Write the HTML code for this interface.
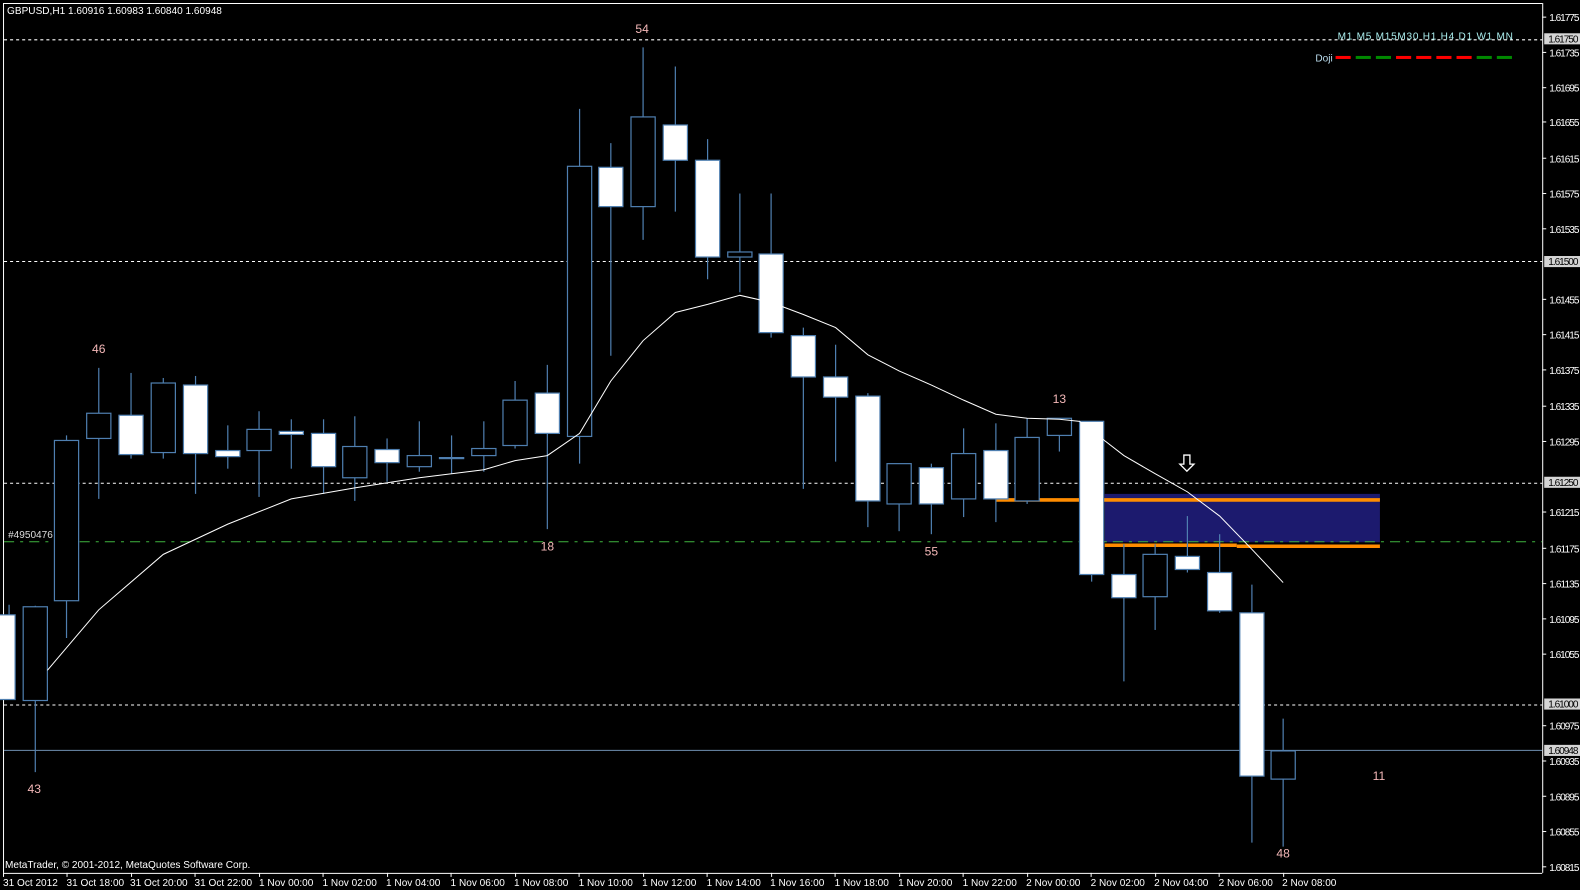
<!DOCTYPE html>
<html><head><meta charset="utf-8"><style>
html,body{margin:0;padding:0;background:#000;overflow:hidden}
svg{display:block}
text{font-family:"Liberation Sans",sans-serif;font-size:10px}
.ax{fill:#fff}
.w{fill:#fff;stroke:#4f7fb0;stroke-width:1.2}
.h{fill:#000;stroke:#4f7fb0;stroke-width:1.2}
.k line{stroke:#4f7fb0;stroke-width:1.2}
.n{fill:#f4b8b8;font-size:12px;text-anchor:middle}
.hl{fill:#d4d4d4}
</style></head><body>
<svg width="1580" height="890" viewBox="0 0 1567.5 883" preserveAspectRatio="none" xmlns="http://www.w3.org/2000/svg">
<rect width="1567.5" height="883" fill="#000"/>
<line x1="3.5" y1="3" x2="3.5" y2="866" stroke="#fff"/>
<line x1="3" y1="3.5" x2="1530" y2="3.5" stroke="#fff"/>
<line x1="1530.5" y1="3" x2="1530.5" y2="866" stroke="#fff"/>
<line x1="3" y1="866.5" x2="1530" y2="866.5" stroke="#fff"/>
<g stroke="#fff" stroke-dasharray="3,3">
<line x1="4" y1="39.5" x2="1530" y2="39.5"/>
<line x1="4" y1="259.5" x2="1530" y2="259.5"/>
<line x1="4" y1="479.5" x2="1530" y2="479.5"/>
<line x1="4" y1="699.5" x2="1530" y2="699.5"/>
</g>
<line x1="4" y1="744.5" x2="1530" y2="744.5" stroke="#6f8fb0"/>
<rect x="1096" y="490" width="273" height="48" fill="#1c1a6e"/>
<line x1="988" y1="496" x2="1369" y2="496" stroke="#ff8c00" stroke-width="3.5"/>
<line x1="1096" y1="541" x2="1227" y2="541" stroke="#ff8c00" stroke-width="3.5"/>
<line x1="1227" y1="542" x2="1369" y2="542" stroke="#ff8c00" stroke-width="3.5"/>
<line x1="4" y1="537.5" x2="1530" y2="537.5" stroke="#3fb43f" stroke-dasharray="10,6,3,6"/>
<text x="8" y="534" fill="#ddd" font-size="9px">#4950476</text>
<g class="k">
<line x1="9" y1="600" x2="9" y2="694"/><rect class="w" x="-3" y="610" width="18" height="84"/>
<line x1="35" y1="601" x2="35" y2="766"/><rect class="h" x="23" y="602" width="24" height="93"/>
<line x1="66" y1="432" x2="66" y2="633"/><rect class="h" x="54" y="437" width="24" height="159"/>
<line x1="98" y1="365" x2="98" y2="495"/><rect class="h" x="86" y="410" width="24" height="25"/>
<line x1="130" y1="370" x2="130" y2="455"/><rect class="w" x="118" y="412" width="24" height="39"/>
<line x1="162" y1="375" x2="162" y2="455"/><rect class="h" x="150" y="380" width="24" height="69"/>
<line x1="194" y1="373" x2="194" y2="490"/><rect class="w" x="182" y="382" width="24" height="68"/>
<line x1="226" y1="422" x2="226" y2="465"/><rect class="w" x="214" y="447" width="24" height="6"/>
<line x1="257" y1="408" x2="257" y2="493"/><rect class="h" x="245" y="426" width="24" height="21"/>
<line x1="289" y1="416" x2="289" y2="465"/><rect class="w" x="277" y="428" width="24" height="3"/>
<line x1="321" y1="416" x2="321" y2="490"/><rect class="w" x="309" y="430" width="24" height="33"/>
<line x1="352" y1="413" x2="352" y2="497"/><rect class="h" x="340" y="443" width="24" height="31"/>
<line x1="384" y1="435" x2="384" y2="478"/><rect class="w" x="372" y="446" width="24" height="13"/>
<line x1="416" y1="418" x2="416" y2="468"/><rect class="h" x="404" y="452" width="24" height="11"/>
<line x1="448" y1="432" x2="448" y2="470"/><rect class="h" x="436" y="454" width="24" height="1"/>
<line x1="480" y1="418" x2="480" y2="468"/><rect class="h" x="468" y="445" width="24" height="7"/>
<line x1="511" y1="378" x2="511" y2="445"/><rect class="h" x="499" y="397" width="24" height="45"/>
<line x1="543" y1="362" x2="543" y2="525"/><rect class="w" x="531" y="390" width="24" height="40"/>
<line x1="575" y1="108" x2="575" y2="460"/><rect class="h" x="563" y="165" width="24" height="268"/>
<line x1="606" y1="142" x2="606" y2="353"/><rect class="w" x="594" y="166" width="24" height="39"/>
<line x1="638" y1="47" x2="638" y2="238"/><rect class="h" x="626" y="116" width="24" height="89"/>
<line x1="670" y1="66" x2="670" y2="210"/><rect class="w" x="658" y="124" width="24" height="35"/>
<line x1="702" y1="138" x2="702" y2="277"/><rect class="w" x="690" y="159" width="24" height="96"/>
<line x1="734" y1="192" x2="734" y2="290"/><rect class="h" x="722" y="250" width="24" height="5"/>
<line x1="765" y1="192" x2="765" y2="335"/><rect class="w" x="753" y="252" width="24" height="78"/>
<line x1="797" y1="325" x2="797" y2="485"/><rect class="w" x="785" y="333" width="24" height="41"/>
<line x1="829" y1="342" x2="829" y2="458"/><rect class="w" x="817" y="374" width="24" height="20"/>
<line x1="861" y1="390" x2="861" y2="523"/><rect class="w" x="849" y="393" width="24" height="104"/>
<line x1="892" y1="460" x2="892" y2="527"/><rect class="h" x="880" y="460" width="24" height="40"/>
<line x1="924" y1="460" x2="924" y2="530"/><rect class="w" x="912" y="464" width="24" height="36"/>
<line x1="956" y1="425" x2="956" y2="513"/><rect class="h" x="944" y="450" width="24" height="45"/>
<line x1="988" y1="420" x2="988" y2="518"/><rect class="w" x="976" y="447" width="24" height="48"/>
<line x1="1019" y1="415" x2="1019" y2="500"/><rect class="h" x="1007" y="434" width="24" height="63"/>
<line x1="1051" y1="415" x2="1051" y2="448"/><rect class="h" x="1039" y="415" width="24" height="17"/>
<line x1="1083" y1="418" x2="1083" y2="577"/><rect class="w" x="1071" y="418" width="24" height="152"/>
<line x1="1115" y1="540" x2="1115" y2="676"/><rect class="w" x="1103" y="570" width="24" height="23"/>
<line x1="1146" y1="540" x2="1146" y2="625"/><rect class="h" x="1134" y="550" width="24" height="42"/>
<line x1="1178" y1="512" x2="1178" y2="568"/><rect class="w" x="1166" y="552" width="24" height="13"/>
<line x1="1210" y1="530" x2="1210" y2="608"/><rect class="w" x="1198" y="568" width="24" height="38"/>
<line x1="1242" y1="580" x2="1242" y2="836"/><rect class="w" x="1230" y="608" width="24" height="162"/>
<line x1="1273" y1="713" x2="1273" y2="840"/><rect class="h" x="1261" y="745" width="24" height="28"/>
</g>
<polyline fill="none" stroke="#fff" stroke-width="1" points="47,665 98,605 162,550 226,520 289,495 352,484 416,474 480,466 511,457 543,452 575,430 606,378 638,338 670,310 702,302 734,293 765,300 797,312 829,325 861,352 892,368 924,382 956,397 988,411 1019,415 1051,416 1071,418 1097,438 1115,452 1146,470 1178,488 1210,512 1242,545 1273,578"/>
<path d="M1174.5 451.5 h6 v9 h4 l-7 7 l-7 -7 h4 z" fill="none" stroke="#fff" stroke-width="1.3"/>
<text class="n" x="637" y="33">54</text>
<text class="n" x="98" y="350">46</text>
<text class="n" x="34" y="787">43</text>
<text class="n" x="543" y="546">18</text>
<text class="n" x="1051" y="400">13</text>
<text class="n" x="924" y="551">55</text>
<text class="n" x="1368" y="774">11</text>
<text class="n" x="1273" y="851">48</text>
<text class="ax" x="7" y="14" fill="#fff">GBPUSD,H1  1.60916 1.60983 1.60840 1.60948</text>
<text x="5" y="861" fill="#fff" font-size="10.5px">MetaTrader, © 2001-2012, MetaQuotes Software Corp.</text>
<text x="1327" y="39" fill="#aee" font-size="9.5px" textLength="174" lengthAdjust="spacing">M1 M5 M15M30  H1  H4   D1  W1  MN</text>
<text x="1305" y="61" fill="#bde" font-size="9.5px">Doji</text>
<g stroke-width="3">
<line x1="1325" y1="57" x2="1340" y2="57" stroke="#f00"/>
<line x1="1345" y1="57" x2="1360" y2="57" stroke="#080"/>
<line x1="1365" y1="57" x2="1380" y2="57" stroke="#080"/>
<line x1="1385" y1="57" x2="1400" y2="57" stroke="#f00"/>
<line x1="1405" y1="57" x2="1420" y2="57" stroke="#f00"/>
<line x1="1425" y1="57" x2="1440" y2="57" stroke="#f00"/>
<line x1="1445" y1="57" x2="1460" y2="57" stroke="#f00"/>
<line x1="1465" y1="57" x2="1480" y2="57" stroke="#080"/>
<line x1="1485" y1="57" x2="1500" y2="57" stroke="#080"/>
</g>
<g stroke="#fff">
<line x1="1530" y1="17" x2="1534" y2="17"/><line x1="1530" y1="52" x2="1534" y2="52"/><line x1="1530" y1="87" x2="1534" y2="87"/><line x1="1530" y1="121" x2="1534" y2="121"/><line x1="1530" y1="157" x2="1534" y2="157"/><line x1="1530" y1="192" x2="1534" y2="192"/><line x1="1530" y1="227" x2="1534" y2="227"/><line x1="1530" y1="297" x2="1534" y2="297"/><line x1="1530" y1="332" x2="1534" y2="332"/><line x1="1530" y1="367" x2="1534" y2="367"/><line x1="1530" y1="403" x2="1534" y2="403"/><line x1="1530" y1="438" x2="1534" y2="438"/><line x1="1530" y1="508" x2="1534" y2="508"/><line x1="1530" y1="544" x2="1534" y2="544"/><line x1="1530" y1="579" x2="1534" y2="579"/><line x1="1530" y1="614" x2="1534" y2="614"/><line x1="1530" y1="649" x2="1534" y2="649"/><line x1="1530" y1="720" x2="1534" y2="720"/><line x1="1530" y1="755" x2="1534" y2="755"/><line x1="1530" y1="790" x2="1534" y2="790"/><line x1="1530" y1="825" x2="1534" y2="825"/><line x1="1530" y1="860" x2="1534" y2="860"/>
</g>
<g class="ax" font-size="9px">
<text x="1537" y="21" textLength="30">1.61775</text><text x="1537" y="56" textLength="30">1.61735</text><text x="1537" y="91" textLength="30">1.61695</text><text x="1537" y="125" textLength="30">1.61655</text><text x="1537" y="161" textLength="30">1.61615</text><text x="1537" y="196" textLength="30">1.61575</text><text x="1537" y="231" textLength="30">1.61535</text><text x="1537" y="301" textLength="30">1.61455</text><text x="1537" y="336" textLength="30">1.61415</text><text x="1537" y="371" textLength="30">1.61375</text><text x="1537" y="407" textLength="30">1.61335</text><text x="1537" y="442" textLength="30">1.61295</text><text x="1537" y="512" textLength="30">1.61215</text><text x="1537" y="548" textLength="30">1.61175</text><text x="1537" y="583" textLength="30">1.61135</text><text x="1537" y="618" textLength="30">1.61095</text><text x="1537" y="653" textLength="30">1.61055</text><text x="1537" y="724" textLength="30">1.60975</text><text x="1537" y="759" textLength="30">1.60935</text><text x="1537" y="794" textLength="30">1.60895</text><text x="1537" y="829" textLength="30">1.60855</text><text x="1537" y="864" textLength="30">1.60815</text>
</g>
<g>
<rect class="hl" x="1532" y="33" width="36" height="11"/><rect class="hl" x="1532" y="254" width="36" height="11"/><rect class="hl" x="1532" y="473" width="36" height="11"/><rect class="hl" x="1532" y="693" width="36" height="11"/><rect class="hl" x="1532" y="739" width="36" height="11"/>
</g>
<g fill="#000" font-size="9px">
<text x="1536" y="42" textLength="30">1.61750</text><text x="1536" y="263" textLength="30">1.61500</text><text x="1536" y="482" textLength="30">1.61250</text><text x="1536" y="702" textLength="30">1.61000</text><text x="1536" y="748" textLength="30">1.60948</text>
</g>
<g stroke="#fff">
<line x1="3.5" y1="866" x2="3.5" y2="870"/><line x1="66.5" y1="866" x2="66.5" y2="870"/><line x1="130.5" y1="866" x2="130.5" y2="870"/><line x1="193.5" y1="866" x2="193.5" y2="870"/><line x1="257.5" y1="866" x2="257.5" y2="870"/><line x1="320.5" y1="866" x2="320.5" y2="870"/><line x1="384.5" y1="866" x2="384.5" y2="870"/><line x1="447.5" y1="866" x2="447.5" y2="870"/><line x1="511.5" y1="866" x2="511.5" y2="870"/><line x1="574.5" y1="866" x2="574.5" y2="870"/><line x1="638.5" y1="866" x2="638.5" y2="870"/><line x1="701.5" y1="866" x2="701.5" y2="870"/><line x1="765.5" y1="866" x2="765.5" y2="870"/><line x1="828.5" y1="866" x2="828.5" y2="870"/><line x1="892.5" y1="866" x2="892.5" y2="870"/><line x1="955.5" y1="866" x2="955.5" y2="870"/><line x1="1019.5" y1="866" x2="1019.5" y2="870"/><line x1="1082.5" y1="866" x2="1082.5" y2="870"/><line x1="1146.5" y1="866" x2="1146.5" y2="870"/><line x1="1209.5" y1="866" x2="1209.5" y2="870"/><line x1="1273.5" y1="866" x2="1273.5" y2="870"/>
</g>
<g class="ax" font-size="9.5px">
<text x="3" y="879">31 Oct 2012</text><text x="66" y="879">31 Oct 18:00</text><text x="129" y="879">31 Oct 20:00</text><text x="193" y="879">31 Oct 22:00</text><text x="257" y="879">1 Nov 00:00</text><text x="320" y="879">1 Nov 02:00</text><text x="383" y="879">1 Nov 04:00</text><text x="447" y="879">1 Nov 06:00</text><text x="510" y="879">1 Nov 08:00</text><text x="574" y="879">1 Nov 10:00</text><text x="637" y="879">1 Nov 12:00</text><text x="701" y="879">1 Nov 14:00</text><text x="764" y="879">1 Nov 16:00</text><text x="828" y="879">1 Nov 18:00</text><text x="891" y="879">1 Nov 20:00</text><text x="955" y="879">1 Nov 22:00</text><text x="1018" y="879">2 Nov 00:00</text><text x="1082" y="879">2 Nov 02:00</text><text x="1145" y="879">2 Nov 04:00</text><text x="1209" y="879">2 Nov 06:00</text><text x="1272" y="879">2 Nov 08:00</text>
</g>
</svg>
</body></html>
